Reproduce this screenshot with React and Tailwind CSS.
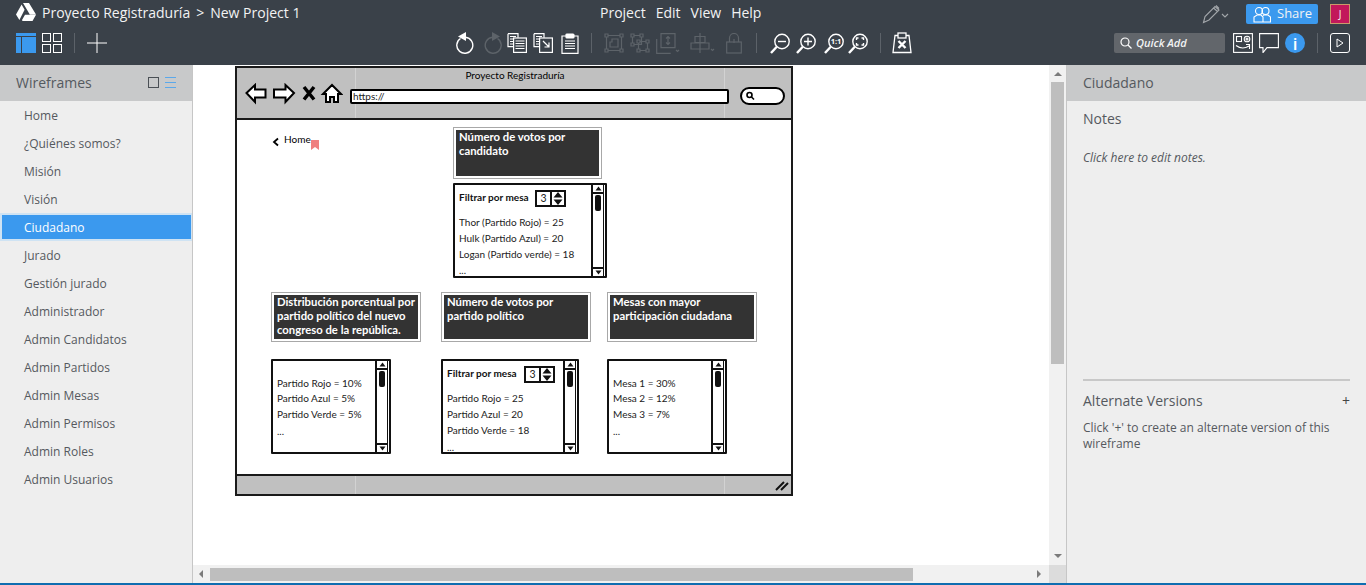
import React from "react";

const S = ({ w, h, vb, className = "", children, sw = 1.4, stroke = "white", fill = "none" }) => (
  <svg width={w} height={h} viewBox={vb || `0 0 ${w} ${h}`} fill={fill} stroke={stroke} strokeWidth={sw} className={"shrink-0 " + className}>
    {children}
  </svg>
);

const Logo = () => (
  <S w={20} h={18} stroke="none" fill="white">
    <path d="M7 0h6l7 11.5h-6.2zM5.6 1.6l3 5.2L3.4 17 0 11.6zM6 17l3-5.2h11L16.5 18H6.5z" />
  </S>
);

const Zoom = ({ children, className }) => (
  <S w={20} h={21} className={className}>
    <circle cx="12" cy="8.5" r="7.2" />
    <path d="M6.8 13.8 1 20" strokeWidth="2.4" />
    {children}
  </S>
);

const Sep = ({ className = "" }) => <div className={"w-px h-[20px] bg-[#5c6269] shrink-0 " + className} />;

const Toolbar = () => (
  <div className="flex items-center ml-[349px]">
    <S w={19} h={22}>
      <path d="M4.5 6.5a8 8 0 1 0 5-1.2" strokeWidth="1.4" />
      <path d="M10 0v9L2 4.5z" fill="white" stroke="none" />
    </S>
    <S w={19} h={22} stroke="#5d6369" className="ml-[8px]">
      <path d="M14.5 6.5a8 8 0 1 1-5-1.2" strokeWidth="1.4" />
      <path d="M9 0v9l8-4.5z" fill="#5d6369" stroke="none" />
    </S>
    <S w={20} h={20} sw={1.2} className="ml-[5px]">
      <path d="M1 .7h10v4M1 .7v13h5" />
      <rect x="6.6" y="5" width="12.8" height="14.4" />
      <path d="M3 3.5h6M3 6h3M3 8.500h3M3 11h3M8.500 8h9M8.500 10.500h9M8.500 13h9M8.500 15.500h9" />
    </S>
    <S w={20} h={20} sw={1.2} className="ml-[6px]">
      <path d="M1 .7h10v4M1 .7v13h5" />
      <rect x="6.6" y="5" width="12.8" height="14.400" />
      <path d="M3 3.500h6M3 6h3M3 8.500h3M3 11h3M10 8l6 6M16 9.500V14h-4.500" />
    </S>
    <S w={18} h={21} sw={1.2} className="ml-[8px]">
      <path d="M5 3H1v17.300h16V3h-4" />
      <rect x="5" y="1" width="8" height="4" rx="1" fill="white" />
      <path d="M4 8h10M4 10.500h10M4 13h10M4 15.500h10" />
    </S>
    <Sep className="ml-[12px]" />
    <S w={20} h={20} stroke="#5d6369" sw={1.2} className="ml-[12px]">
      <path d="M2.500 2.500h15v15h-15zM8 6h6v8H6V9h2z" />
      <path d="M1 1h3v3H1zM16 1h3v3h-3zM1 16h3v3H1zM16 16h3v3h-3z" fill="#3a4149" />
    </S>
    <S w={20} h={20} stroke="#5d6369" sw={1.2} className="ml-[6px]">
      <path d="M2.500 2.500h9v9h-9zM8.500 8.500h9v9h-9z" />
      <path d="M1 1h3v3H1zM10 1h3v3h-3zM1 10h3v3H1zM7 7h3v3H7zM16 7h3v3h-3zM7 16h3v3H7zM16 16h3v3h-3z" fill="#3a4149" />
    </S>
    <S w={24} h={21} stroke="#5d6369" sw={1.2} className="ml-[6px]">
      <path d="M5 .7h14v14H5zM.7 6v14.300h14" />
      <path d="M12 3.500v8M10 5.500l2-2 2 2M10 9.500l2 2 2-2M20 17l1.500 1.500L23 17" />
    </S>
    <S w={26} h={20} stroke="#5d6369" sw={1.2} className="ml-[10px]">
      <path d="M10 0v20M5 3.500h10v6H5zM1 10h18v6H1zM21 16l1.500 1.500L24 16" />
    </S>
    <S w={16} h={21} stroke="#5d6369" sw={1.2} className="ml-[10px]">
      <rect x=".7" y="9" width="14.600" height="11" />
      <path d="M3.500 9V5a4.500 4.500 0 0 1 9 0v4M8 6v4" />
    </S>
    <Sep className="ml-[14px]" />
    <Zoom className="ml-[13px]"><path d="M8 8.500h8" /></Zoom>
    <Zoom className="ml-[6px]"><path d="M8 8.500h8M12 4.500v8" /></Zoom>
    <Zoom className="ml-[8px]"><text x="12" y="11" fontSize="7.500" fontWeight="700" fill="white" stroke="none" textAnchor="middle" fontFamily="Open Sans">1:1</text></Zoom>
    <Zoom className="ml-[4px]"><path d="M8.500 7V5h2M13.500 5h2v2M15.500 10v2h-2M10.500 12h-2v-2" /></Zoom>
    <Sep className="ml-[12px]" />
    <S w={20} h={22} sw={1.3} className="ml-[11px]">
      <path d="M6 3.500H3L1 20.500h18l-2-17h-3" />
      <rect x="6" y="1" width="8" height="5" />
      <path d="M6.500 9l7 7M13.500 9l-7 7" strokeWidth="2.400" />
    </S>
  </div>
);

const Header = () => (
  <header className="h-[65px] bg-[#3a4149] shrink-0 text-[#f2f3f4]">
    <div className="flex items-center h-[26px] pb-[2px]">
      <div className="w-[600px] flex items-center pl-[16px] shrink-0">
        <Logo />
        <span className="ml-[6px] text-[14px]">Proyecto Registraduría</span>
        <span className="ml-[6px] text-[14px]">&gt;</span>
        <span className="ml-[6px] text-[14px]">New Project 1</span>
      </div>
      <nav className="flex gap-[10px] text-[14px]">
        <span>Project</span><span>Edit</span><span>View</span><span>Help</span>
      </nav>
      <div className="ml-auto flex items-center mr-[16px] pt-[4px]">
        <S w={27} h={20} stroke="#a3a7ab" sw={1.1}>
          <path d="M1.500 18.500l1.500-6L13 2.500l4 3.500L7 16zM11.500 4l4 3.500M14 1.500l3 3" />
          <path d="M20 10l3 3 3-3" />
        </S>
        <div className="ml-[17px] w-[72px] h-[20px] rounded-[2px] bg-[#3b99ee] flex items-center pl-[7px] text-[13px]">
          <S w={18} h={17} sw={1.1}>
            <circle cx="6" cy="5" r="3.500" /><circle cx="12.500" cy="5" r="3.500" />
            <path d="M1 16v-5l3-2h4l2 2v5zM10 9.500l1-.5h4l2.500 2v5H10" />
          </S>
          <span className="ml-[6px]">Share</span>
        </div>
        <div className="ml-[12px] w-[20px] h-[20px] bg-[#c2185b] border border-[#c99a6b] flex items-center justify-center text-[10px]">J</div>
      </div>
    </div>
    <div className="flex items-center h-[34px] pl-[16px]">
      <div className="w-[20px] h-[20px] bg-[#3b99ee] flex flex-col shrink-0">
        <div className="h-[4px] border-b border-[#3a4149]" />
        <div className="flex-1 ml-[5px] border-l border-[#3a4149]" />
      </div>
      <div className="ml-[6px] grid grid-cols-2 gap-[2px] w-[20px] h-[20px] shrink-0">
        <div className="border border-white" /><div className="border border-white" />
        <div className="border border-white" /><div className="border border-white" />
      </div>
      <Sep className="ml-[12px]" />
      <S w={20} h={20} sw={1} className="ml-[12px]"><path d="M0 10h20M10 0v20" /></S>
      <Toolbar />
      <div className="ml-auto flex items-center mr-[16px]">
        <div className="w-[111px] h-[20px] rounded-[2px] bg-[#62666b] flex items-center pl-[6px] text-[11px] italic font-semibold">
          <S w={12} h={12} sw={1.2}><circle cx="5" cy="5" r="4" /><path d="M8 8l3.500 3.500" /></S>
          <span className="ml-[4px]">Quick Add</span>
        </div>
        <S w={20} h={20} sw={1.1} className="ml-[8px]">
          <rect x=".6" y=".6" width="18.800" height="18.800" />
          <rect x="3.500" y="3.500" width="5" height="5" /><circle cx="14" cy="6" r="2.800" /><circle cx="14" cy="6" r="1" />
          <path d="M3 12.500c4 3 9 3 13 .5M13 11.500h3.500V16" />
        </S>
        <S w={20} h={20} sw={1.1} className="ml-[6px]">
          <path d="M.6.600h18.800v14H8l-4 5v-5H.6z" />
        </S>
        <div className="ml-[6px] w-[20px] h-[20px] rounded-full bg-[#3b99ee] flex items-center justify-center text-white text-[17px] font-semibold leading-none">i</div>
        <Sep className="ml-[12px]" />
        <div className="ml-[12px] w-[20px] h-[20px] rounded-[3px] border border-white flex items-center justify-center">
          <S w={8} h={10} sw={1}><path d="M1 1l6 4-6 4z" /></S>
        </div>
      </div>
    </div>
  </header>
);

const pages = ["Home", "¿Quiénes somos?", "Misión", "Visión", "Ciudadano", "Jurado", "Gestión jurado", "Administrador", "Admin Candidatos", "Admin Partidos", "Admin Mesas", "Admin Permisos", "Admin Roles", "Admin Usuarios"];

const Sidebar = () => (
  <aside className="w-[193px] shrink-0 bg-[#eeeeee] border-r border-[#c6c6c6] flex flex-col">
    <div className="h-[36px] bg-[#c8c9ca] flex items-center pl-[16px] pr-[16px] pb-[2px] text-[14px] text-[#555a60] shrink-0">
      <span>Wireframes</span>
      <div className="ml-auto w-[11px] h-[11px] border border-[#4a4f55]" />
      <div className="ml-[6px] w-[11px] flex flex-col gap-[4px]">
        <div className="h-px bg-[#5ba8ea]" /><div className="h-px bg-[#5ba8ea]" /><div className="h-px bg-[#5ba8ea]" />
      </div>
    </div>
    {pages.map((p) =>
      p === "Ciudadano" ? (
        <div key={p} className="h-[28px] bg-[#cfe3f3] py-[2px] pl-[2px] pr-[1px]">
          <div className="h-full bg-[#3b99ee] flex items-center pl-[22px] pt-[2px] text-[12px] text-white">{p}</div>
        </div>
      ) : (
        <div key={p} className="h-[28px] flex items-center pl-[24px] pt-[2px] text-[12px] text-[#55595e]">{p}</div>
      )
    )}
  </aside>
);

const wf = { fontFamily: "Lato, sans-serif" };

const DarkBox = ({ x, y, w, h, lines }) => (
  <div className="absolute border border-[#a8a8a8] p-[2px] bg-white" style={{ left: x - 237, top: y - 68, width: w, height: h }}>
    <div className="w-full h-full bg-[#333333] text-white text-[11.3px] font-bold leading-[14px] pl-[3px] whitespace-nowrap">
      {lines.map((l) => <div key={l}>{l}</div>)}
    </div>
  </div>
);

const Stepper = ({ x, y }) => (
  <div className="absolute h-[17px] w-[31px] border-2 border-[#111] flex bg-white" style={{ left: x, top: y }}>
    <div className="flex-1 flex items-center justify-center text-[10.5px] border-r-2 border-[#111]">3</div>
    <svg width="12" height="13" viewBox="0 0 12 13" fill="#111"><path d="M6 0l4.500 5.500h-9zM6 13l4.500-5.500h-9z" /></svg>
  </div>
);

const ListBox = ({ x, y, w, textLeft, tops, lines, filter }) => (
  <div className="absolute h-[95px] border-2 border-[#111] rounded-[1px] bg-white text-[10px] text-[#222] whitespace-nowrap" style={{ left: x - 237, top: y - 68, width: w }}>
    {lines.map((l, i) => (
      <div key={i} className="absolute leading-[14px]" style={{ left: textLeft, top: tops[i] - y - 9 }}>{l}</div>
    ))}
    {filter && <div className="absolute leading-[14px] font-bold text-[10px] text-[#111] left-[4px]" style={{ top: filter.top }}>Filtrar por mesa</div>}
    {filter && <Stepper x={filter.x} y={filter.y} />}
    <div className="absolute right-[1px] top-0 bottom-0 w-[13px] border-l-2 border-r border-[#111] flex flex-col items-center justify-between">
      <div className="w-full flex flex-col items-center">
        <div className="w-full h-[9px] border-b-2 border-[#111] flex items-center justify-center">
          <svg width="9" height="7" viewBox="0 0 9 7" fill="#111"><path d="M4.500 1.500l3 4h-6z" /></svg>
        </div>
        <div className="w-[6px] h-[16px] bg-[#111] rounded-[2px] mt-[1px]" />
      </div>
      <div className="w-full h-[9px] border-t-2 border-[#111] flex items-center justify-center">
        <svg width="9" height="7" viewBox="0 0 9 7" fill="#111"><path d="M4.500 5.500l3-4h-6z" /></svg>
      </div>
    </div>
  </div>
);

const Wireframe = () => (
  <div className="absolute left-[42px] top-px w-[558px] h-[430px] border-2 border-[#1a1a1a] bg-white text-black" style={wf}>
    <div className="absolute left-0 right-0 top-0 h-[52px] bg-[#c0c0c0] border-b-2 border-[#1a1a1a]" />
    <div className="absolute left-[118px] top-0 w-px h-[50px] bg-[#d2d2d2]" />
    <div className="absolute left-[487px] top-0 w-px h-[50px] bg-[#d2d2d2]" />
    <div className="absolute left-0 right-0 bottom-0 h-[20px] bg-[#c0c0c0] border-t-2 border-[#1a1a1a]" />
    <div className="absolute left-[118px] bottom-0 w-px h-[18px] bg-[#d2d2d2]" />
    <div className="absolute left-[487px] bottom-0 w-px h-[18px] bg-[#d2d2d2]" />
    <div className="absolute left-0 right-0 top-0 text-center text-[10px] leading-[14px] pl-[2px]">Proyecto Registraduría</div>
    <svg className="absolute left-[8px] top-[15px]" width="98" height="22" viewBox="0 0 98 22" fill="white" stroke="black" strokeWidth="2">
      <path d="M1.500 10 10 2v4.500h10.500v8H10V19z" />
      <path d="M49 10 40.500 2v4.500H29v8h11.500V19z" />
      <path d="M59 4l10 12.500M69 4 59 16.500" strokeWidth="3.500" />
      <path d="M78 11l9-9 9 9h-3v8h-4v-5h-4v5h-4v-8z" />
    </svg>
    <div className="absolute left-[113px] top-[21px] w-[379px] h-[15px] border-2 border-black bg-white rounded-[2px] text-[10px] leading-[11px] pl-[1px] text-[#222]">https://</div>
    <div className="absolute left-[503px] top-[19px] w-[45px] h-[18px] border-2 border-black bg-white rounded-[10px]">
      <svg className="absolute left-[3px] top-[2px]" width="10" height="10" viewBox="0 0 10 10" fill="none" stroke="black" strokeWidth="1.600"><circle cx="4.500" cy="4" r="2.500" /><path d="M6.500 6l2.500 2.500" /></svg>
    </div>
    <svg className="absolute left-[35px] top-[69px]" width="8" height="10" viewBox="0 0 8 10" fill="none" stroke="black" strokeWidth="1.800"><path d="M6 1.500 2 5l4 3.500" /></svg>
    <div className="absolute left-[47px] top-[64px] text-[10px] leading-[14px]">Home</div>
    <svg className="absolute left-[74px] top-[72px]" width="8" height="10" viewBox="0 0 8 10" fill="#ef7f7f"><path d="M0 0h8v10L4 7 0 10z" /></svg>

    <DarkBox x={453} y={127} w={149} h={52} lines={["Número de votos por", "candidato"]} />
    <DarkBox x={271} y={292} w={150} h={50} lines={["Distribución porcentual por", "partido político del nuevo", "congreso de la república."]} />
    <DarkBox x={441} y={292} w={150} h={50} lines={["Número de votos por", "partido político"]} />
    <DarkBox x={607} y={292} w={150} h={50} lines={["Mesas con mayor", "participación ciudadana"]} />

    <ListBox x={453} y={183} w={154} textLeft={4} tops={[222, 238, 254, 270]} lines={["Thor (Partido Rojo) = 25", "Hulk (Partido Azul) = 20", "Logan (Partido verde) = 18", "..."]} filter={{ top: 5, x: 80, y: 5 }} />
    <ListBox x={271} y={359} w={120} textLeft={4} tops={[383, 398, 414, 431]} lines={["Partido Rojo = 10%", "Partido Azul = 5%", "Partido Verde = 5%", "..."]} />
    <ListBox x={441} y={359} w={138} textLeft={4} tops={[398, 414, 430, 447]} lines={["Partido Rojo = 25", "Partido Azul = 20", "Partido Verde = 18", "..."]} filter={{ top: 5, x: 81, y: 5 }} />
    <ListBox x={607} y={359} w={120} textLeft={4} tops={[383, 398, 414, 431]} lines={["Mesa 1 = 30%", "Mesa 2 = 12%", "Mesa 3 = 7%", "..."]} />

    <svg className="absolute right-[2px] bottom-[2px]" width="14" height="12" viewBox="0 0 14 12" stroke="#111" strokeWidth="2"><path d="M1 10 9 2M6 10l7-7" /></svg>
  </div>
);

const Arrow = ({ d, className = "" }) => (
  <svg width="8" height="8" viewBox="0 0 8 8" fill="#7b7b7b" className={className}><path d={d} /></svg>
);

const Center = () => (
  <div className="flex-1 min-w-0 flex flex-col">
    <div className="flex-1 flex min-h-0">
      <div className="flex-1 relative bg-white overflow-hidden">
        <Wireframe />
      </div>
      <div className="w-[17px] bg-[#f1f1f1] flex flex-col items-center pt-[5px] pb-[5px]">
        <Arrow d="M4 2l4 4H0z" />
        <div className="w-[13px] h-[282px] bg-[#bebebe] mt-[4px]" />
        <Arrow d="M4 6 0 2h8z" className="mt-auto" />
      </div>
    </div>
    <div className="h-[18px] flex shrink-0">
      <div className="flex-1 bg-[#f1f1f1] flex items-center pl-[4px] pr-[6px]">
        <Arrow d="M2 4l4-4v8z" />
        <div className="w-[703px] h-[13px] bg-[#bebebe] ml-[5px]" />
        <Arrow d="M6 4 2 0v8z" className="ml-auto" />
      </div>
      <div className="w-[17px] bg-[#dcdcdc]" />
    </div>
  </div>
);

const RightPanel = () => (
  <aside className="w-[300px] shrink-0 bg-[#eeeeee] border-l border-[#c6c6c6] flex flex-col text-[#55595e]">
    <div className="h-[36px] bg-[#c8c9ca] flex items-center pl-[16px] pb-[2px] text-[14px] shrink-0">Ciudadano</div>
    <div className="px-[16px] flex-1 flex flex-col">
      <div className="text-[14px] leading-[20px] mt-[8px]">Notes</div>
      <div className="text-[12px] italic leading-[16px] mt-[21px]">Click here to edit notes.</div>
      <div className="h-[2px] bg-[#c8c8c8] mt-[213px]" />
      <div className="flex items-center text-[14px] leading-[20px] mt-[10px]">
        <span>Alternate Versions</span>
        <span className="ml-auto text-[14px] text-[#444]">+</span>
      </div>
      <div className="text-[12px] leading-[16px] mt-[9px]">Click '+' to create an alternate version of this<br />wireframe</div>
    </div>
  </aside>
);

export default function App() {
  return (
    <div className="w-[1366px] h-[585px] overflow-hidden flex flex-col bg-white" style={{ fontFamily: '"Open Sans", sans-serif' }}>
      <Header />
      <div className="flex-1 flex min-h-0">
        <Sidebar />
        <Center />
        <RightPanel />
      </div>
      <div className="h-[2px] bg-[#0f6db0] shrink-0" />
    </div>
  );
}
